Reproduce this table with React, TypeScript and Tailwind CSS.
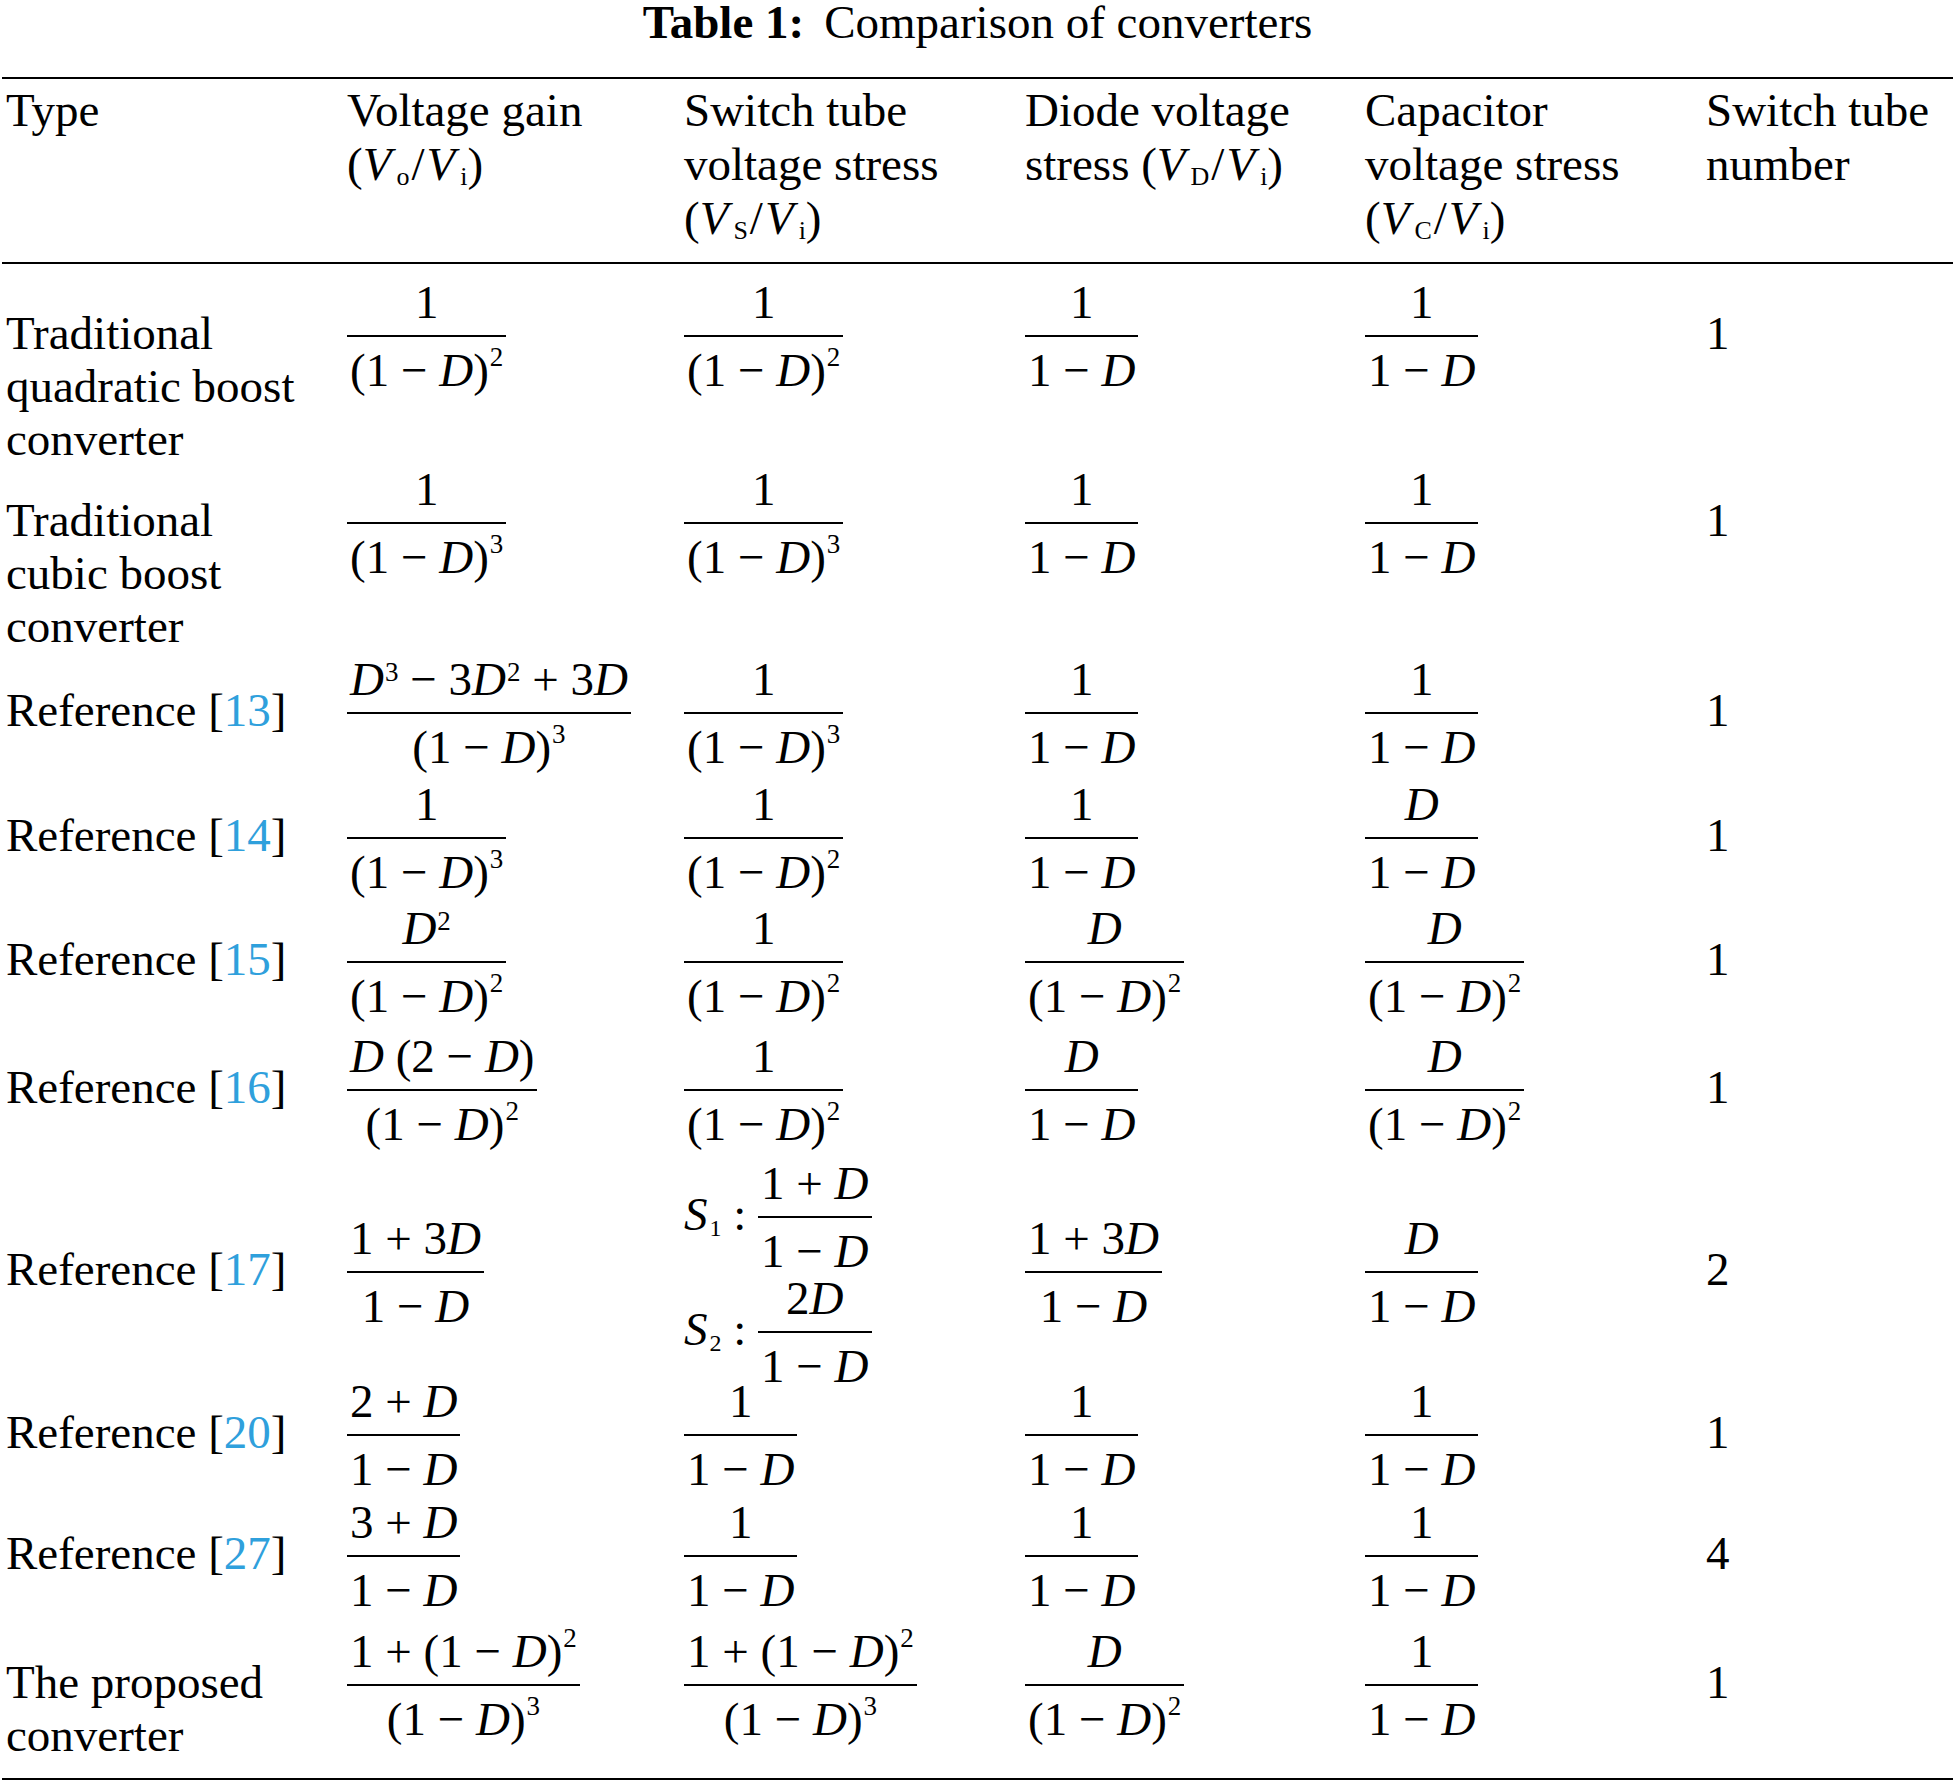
import React from 'react';

// exponent: hi = after a closing paren (sits higher)
const Sup = ({ c, hi }: { c: string; hi?: boolean }) => (
  <span
    className={
      hi
        ? 'relative top-[-20px] ml-[1px] text-[27px] leading-none'
        : 'relative top-[-14px] ml-[1px] text-[27px] leading-none'
    }
  >
    {c}
  </span>
);

const Sub = ({ c }: { c: string }) => (
  <span className="relative top-[5px] ml-[5px] text-[26px] leading-none not-italic">{c}</span>
);

const D = () => <span className="italic">D</span>;
const V = () => <span className="italic">V</span>;
const Slash = () => <span className="mx-[2px]">/</span>;

const OneD = () => (
  <>
    1 − <D />
  </>
);

const Pow = ({ e }: { e: string }) => (
  <>
    (1 − <D />)<Sup c={e} hi />
  </>
);

const Frac = ({ n, d }: { n: React.ReactNode; d: React.ReactNode }) => (
  <span className="inline-flex flex-col whitespace-nowrap text-center align-[31px]">
    <span className="block px-[3px] pb-[10px] leading-[46px]">{n}</span>
    <span className="block h-[2px] bg-black" />
    <span className="block px-[3px] pt-[10px] leading-[46px]">{d}</span>
  </span>
);

const Ref = ({ n }: { n: string }) => (
  <span className="whitespace-nowrap">
    Reference [<span className="text-[#2fa0dc]">{n}</span>]
  </span>
);

const Row = ({ cls, cells }: { cls: string; cells: React.ReactNode[] }) => (
  <div className={`grid grid-cols-[341px_337px_341px_340px_341px_1fr] items-baseline pl-[4px] pt-[15px] ${cls}`}>
    {cells.map((c, i) => (
      <div key={i} className="leading-[53px]">
        {c}
      </div>
    ))}
  </div>
);

const inv1 = <Frac n="1" d={<OneD />} />;

export default function App() {
  return (
    <div className="min-h-screen w-[1955px] bg-white font-['Liberation_Serif',serif] text-[47px] text-black">
      <div className="mb-[33px] h-[44px] text-center leading-[44px]">
        <b>Table 1:</b>
        <span className="ml-[20px]">Comparison of converters</span>
      </div>

      <div className="mx-[2px]">
        {/* header */}
        <div className="grid h-[187px] grid-cols-[341px_337px_341px_340px_341px_1fr] items-start border-y-2 border-black pl-[4px] pt-[4px] leading-[54px]">
          <div>Type</div>
          <div>
            Voltage gain
            <br />
            (<V />
            <Sub c="o" />
            <Slash />
            <V />
            <Sub c="i" />)
          </div>
          <div>
            Switch tube
            <br />
            voltage stress
            <br />
            (<V />
            <Sub c="S" />
            <Slash />
            <V />
            <Sub c="i" />)
          </div>
          <div>
            Diode voltage
            <br />
            stress (<V />
            <Sub c="D" />
            <Slash />
            <V />
            <Sub c="i" />)
          </div>
          <div>
            Capacitor
            <br />
            voltage stress
            <br />
            (<V />
            <Sub c="C" />
            <Slash />
            <V />
            <Sub c="i" />)
          </div>
          <div>
            Switch tube
            <br />
            number
          </div>
        </div>

        <Row
          cls="h-[187px]"
          cells={[
            <>
              Traditional
              <br />
              quadratic boost
              <br />
              converter
            </>,
            <Frac n="1" d={<Pow e="2" />} />,
            <Frac n="1" d={<Pow e="2" />} />,
            inv1,
            inv1,
            '1',
          ]}
        />
        <Row
          cls="h-[190px]"
          cells={[
            <>
              Traditional
              <br />
              cubic boost
              <br />
              converter
            </>,
            <Frac n="1" d={<Pow e="3" />} />,
            <Frac n="1" d={<Pow e="3" />} />,
            inv1,
            inv1,
            '1',
          ]}
        />
        <Row
          cls="h-[125px]"
          cells={[
            <Ref n="13" />,
            <Frac
              n={
                <>
                  <D />
                  <Sup c="3" /> − 3<D />
                  <Sup c="2" /> + 3<D />
                </>
              }
              d={<Pow e="3" />}
            />,
            <Frac n="1" d={<Pow e="3" />} />,
            inv1,
            inv1,
            '1',
          ]}
        />
        <Row
          cls="h-[124px]"
          cells={[
            <Ref n="14" />,
            <Frac n="1" d={<Pow e="3" />} />,
            <Frac n="1" d={<Pow e="2" />} />,
            inv1,
            <Frac n={<D />} d={<OneD />} />,
            '1',
          ]}
        />
        <Row
          cls="h-[128px]"
          cells={[
            <Ref n="15" />,
            <Frac
              n={
                <>
                  <D />
                  <Sup c="2" />
                </>
              }
              d={<Pow e="2" />}
            />,
            <Frac n="1" d={<Pow e="2" />} />,
            <Frac n={<D />} d={<Pow e="2" />} />,
            <Frac n={<D />} d={<Pow e="2" />} />,
            '1',
          ]}
        />
        <Row
          cls="h-[127px]"
          cells={[
            <Ref n="16" />,
            <Frac
              n={
                <>
                  <D /> (2 − <D />)
                </>
              }
              d={<Pow e="2" />}
            />,
            <Frac n="1" d={<Pow e="2" />} />,
            <Frac n={<D />} d={<OneD />} />,
            <Frac n={<D />} d={<Pow e="2" />} />,
            '1',
          ]}
        />
        <Row
          cls="h-[218px]"
          cells={[
            <Ref n="17" />,
            <Frac
              n={
                <>
                  1 + 3<D />
                </>
              }
              d={<OneD />}
            />,
            <span className="inline-flex flex-col gap-[1px] align-middle">
              <span className="block whitespace-nowrap leading-[46px]">
                <span className="italic">S</span>
                <span className="relative top-[6px] ml-[2px] text-[24px] leading-none">1</span> :{' '}
                <Frac
                  n={
                    <>
                      1 + <D />
                    </>
                  }
                  d={<OneD />}
                />
              </span>
              <span className="block whitespace-nowrap leading-[46px]">
                <span className="italic">S</span>
                <span className="relative top-[6px] ml-[2px] text-[24px] leading-none">2</span> :{' '}
                <Frac
                  n={
                    <>
                      2<D />
                    </>
                  }
                  d={<OneD />}
                />
              </span>
            </span>,
            <Frac
              n={
                <>
                  1 + 3<D />
                </>
              }
              d={<OneD />}
            />,
            <Frac n={<D />} d={<OneD />} />,
            '2',
          ]}
        />
        <Row
          cls="h-[121px]"
          cells={[
            <Ref n="20" />,
            <Frac
              n={
                <>
                  2 + <D />
                </>
              }
              d={<OneD />}
            />,
            inv1,
            inv1,
            inv1,
            '1',
          ]}
        />
        <Row
          cls="h-[129px]"
          cells={[
            <Ref n="27" />,
            <Frac
              n={
                <>
                  3 + <D />
                </>
              }
              d={<OneD />}
            />,
            inv1,
            inv1,
            inv1,
            '4',
          ]}
        />
        <Row
          cls="h-[167px] border-b-2 border-black"
          cells={[
            <>
              The proposed
              <br />
              converter
            </>,
            <Frac
              n={
                <>
                  1 + <Pow e="2" />
                </>
              }
              d={<Pow e="3" />}
            />,
            <Frac
              n={
                <>
                  1 + <Pow e="2" />
                </>
              }
              d={<Pow e="3" />}
            />,
            <Frac n={<D />} d={<Pow e="2" />} />,
            inv1,
            '1',
          ]}
        />
      </div>
    </div>
  );
}
